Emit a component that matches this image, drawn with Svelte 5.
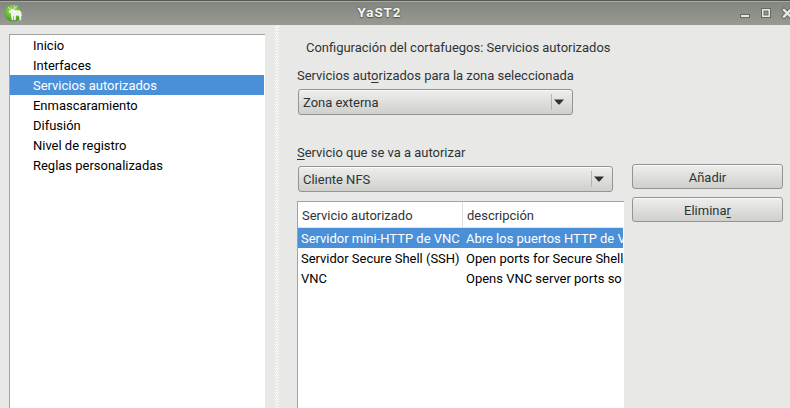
<script>
  const sections = [
    'Inicio', 'Interfaces', 'Servicios autorizados', 'Enmascaramiento',
    'Difusión', 'Nivel de registro', 'Reglas personalizadas'
  ];
  let section = $state(2);

  const services = [
    ['Servidor mini-HTTP de VNC', 'Abre los puertos HTTP de VNC'],
    ['Servidor Secure Shell (SSH)', 'Open ports for Secure Shell'],
    ['VNC', 'Opens VNC server ports so']
  ];
  let service = $state(0);
</script>

{#snippet combo(text, wide)}
  <div class="combo" class:wide>
    <span class="value">{text}</span>
    <span class="sep"></span>
    <svg width="10" height="6" viewBox="0 0 10 6"><path d="M0 .5h10L5.5 5.5h-1z" fill="#2e3436" /></svg>
  </div>
{/snippet}

<div class="window">
  <header>
    <svg class="logo" width="18" height="18" viewBox="0 0 18 18">
      <defs>
        <radialGradient id="green" cx="45%" cy="35%" r="65%">
          <stop offset="0" stop-color="#a6dc62" />
          <stop offset=".65" stop-color="#63b92c" />
          <stop offset="1" stop-color="#3d9414" />
        </radialGradient>
      </defs>
      <circle cx="9" cy="9" r="8.6" fill="url(#green)" />
      <path d="M8.2 5.8L5.500 4.500 4 3M8.500 5.800L11.500 4l1.800-2.500M11 4.200l-.5-2.700" stroke="#d3e2c8" stroke-width=".9" fill="none" />
      <path d="M4.700 7.200l3-1.900 2 .3 1.500.6 4.500.1 1.600 1.700.5 4-.7.200.1 4h-1.400l-.8-3.900-.7-.9-2.400.3-.2 4.500h-1.500l-.4-4.200-.6-.2.100 4.400H7.700L7 10.600l-.5-2-1.500.2z" fill="#f1f3ef" />
    </svg>
    <h1>YaST2</h1>
    <svg class="controls" width="52" height="12" viewBox="0 0 52 12">
      <rect x="2.5" y="7.5" width="9" height="3" fill="#e7e8e4" stroke="#666862" />
      <rect x="23.5" y="1.5" width="9" height="9" fill="#e7e8e4" stroke="#666862" />
      <rect x="26" y="4" width="4" height="4" fill="#92948d" stroke="#666862" stroke-width=".9" />
      <path d="M46 3l6.500 6.500m0-6.500L46 9.500" stroke="#666862" stroke-width="4.400" stroke-linecap="square" />
      <path d="M46 3l6.500 6.500m0-6.500L46 9.500" stroke="#e7e8e4" stroke-width="2.400" stroke-linecap="square" />
    </svg>
  </header>

  <div class="body">
    <nav>
      {#each sections as name, i}
        <button class="item" class:selected={section === i} onclick={() => (section = i)}>{name}</button>
      {/each}
    </nav>
    <div class="grip"></div>
    <main>
      <h2>Configuración del cortafuegos: Servicios autorizados</h2>
      <p class="label zone">Servicios aut<u>o</u>rizados para la zona seleccionada</p>
      {@render combo('Zona externa', false)}
      <div class="columns">
        <section>
          <p class="label"><u>S</u>ervicio que se va a autorizar</p>
          {@render combo('Cliente NFS', true)}
          <div class="table">
            <div class="row head"><span>Servicio autorizado</span><span>descripción</span></div>
            {#each services as [name, description], i}
              <div class="row" class:selected={service === i}>
                <span>{name}</span><span>{description}</span>
              </div>
            {/each}
          </div>
        </section>
        <aside>
          <button class="push">Añadir</button>
          <button class="push">Elimina<u>r</u></button>
        </aside>
      </div>
    </main>
  </div>
</div>

<style>
  :global(body) { margin: 0; overflow: hidden; }
  .window {
    width: 790px;
    height: 408px;
    display: flex;
    flex-direction: column;
    overflow: hidden;
    background: #e8e8e6;
    color: #2e3436;
    font: 12.97px/20px Roboto, "Liberation Sans", sans-serif;
  }
  h1, h2, p { margin: 0; font: inherit; }
  u { text-decoration: underline 1px; text-underline-offset: 2px; text-decoration-skip-ink: none; }
  header {
    flex: none;
    height: 25px;
    box-sizing: border-box;
    display: grid;
    grid-template-columns: 22px 1fr 52px;
    align-items: center;
    border-top: 1px solid #555753;
    background: linear-gradient(#a7a9a2 0 1px, #83857f 1px, #989a93);
  }
  .logo { margin-left: 4px; }
  h1 {
    text-align: center;
    font-size: 13.333px;
    font-weight: 700;
    letter-spacing: 1px;
    padding-right: 1px;
    color: #f6f6f4;
    text-shadow: 0 1px 1px #50524d, 0 0 2px #5b5d58;
  }
  .body { flex: 1; min-height: 0; display: flex; }
  nav {
    width: 256px;
    box-sizing: border-box;
    margin: 9px 10px 0 9px;
    padding-right: 1px;
    border: solid #a1a39d;
    border-width: 1px 0 0 1px;
    background: #fff;
  }
  .item {
    display: block;
    width: 100%;
    height: 20px;
    padding: 1px 0 0 23px;
    border: 0;
    background: none;
    color: #000;
    font: inherit;
    text-align: left;
  }
  .selected, .item.selected { background: #4a90d9; color: #fff; }
  .grip {
    width: 4px;
    margin-top: 1px;
    background:
      repeating-linear-gradient(#0000 0 1px, #fff 1px 2px, #0000 2px 3px) 0 0 / 1px 100% no-repeat,
      repeating-linear-gradient(#fff 0 1px, #0000 1px 3px) 1px 0 / 1px 100% no-repeat,
      repeating-linear-gradient(#0000 0 1px, #fff 1px 2px, #0000 2px 3px) 2px 0 / 1px 100% no-repeat,
      repeating-linear-gradient(#fff 0 1px, #0000 1px 3px) 3px 0 / 1px 100% no-repeat;
  }
  main { padding: 13px 0 0 18px; flex: 1; min-width: 0; display: flex; flex-direction: column; }
  h2 { padding-left: 9px; }
  .label { height: 23px; }
  .zone { margin-top: 8px; }
  .combo {
    width: 275px;
    height: 26px;
    box-sizing: border-box;
    margin-left: 1px;
    padding: 0 8px 0 4px;
    display: flex;
    align-items: center;
    border: 1px solid #949591;
    border-radius: 3px;
    background: linear-gradient(#eeeeed, #cfcfcc);
    box-shadow: inset 0 1px #fafaf9;
  }
  .combo.wide { width: 315px; }
  .value { flex: 1; padding-top: 2px; }
  .sep { width: 1px; height: 16px; margin-right: 2px; background: #b5b6b3; }
  .columns { display: flex; margin-top: 28px; flex: 1; min-height: 0; }
  section { width: 327px; display: flex; flex-direction: column; }
  .table {
    margin-top: 9px;
    flex: 1;
    padding-right: 1px;
    border: solid #a1a39d;
    border-width: 1px 0 0 1px;
    background: #fff;
    color: #000;
  }
  .row { display: grid; grid-template-columns: 165px 1fr; height: 20px; line-height: 22px; }
  .row span { overflow: hidden; white-space: nowrap; padding-left: 3px; }
  .row.head { height: 26px; line-height: 27px; color: #2e3436; }
  .head span { padding-left: 4px; height: 25px; border-bottom: 1px solid #e3e3e1; }
  .head span:first-child { border-right: 1px solid #dededc; }
  aside { margin: 21px 0 0 8px; display: flex; flex-direction: column; gap: 8px; }
  .push {
    width: 151px;
    height: 25px;
    padding: 2px 0 0;
    border: 1px solid #949591;
    border-radius: 3px;
    background: linear-gradient(#eeeeed, #cfcfcc);
    box-shadow: inset 0 1px #fafaf9;
    color: inherit;
    font: inherit;
    line-height: 22px;
  }
</style>
